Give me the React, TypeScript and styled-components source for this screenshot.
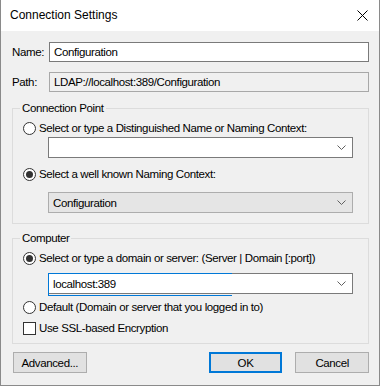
import React from "react";
import styled, { createGlobalStyle } from "styled-components";

const GlobalStyle = createGlobalStyle`
  html, body {
    margin: 0;
    padding: 0;
    background: #ffffff;
  }
  * {
    box-sizing: border-box;
  }
`;

const FONT = `"Segoe UI", "Liberation Sans", Arial, sans-serif`;

const Window = styled.div`
  width: 380px;
  height: 386px;
  display: flex;
  flex-direction: column;
  background: #f0f0f0;
  border: 1px solid #8a8a8a;
  border-top: none;
  font-family: ${FONT};
  font-size: 11.5px;
  letter-spacing: -0.38px;
  color: #000;
  overflow: hidden;
`;

const TitleBar = styled.div`
  height: 31px;
  flex: none;
  background: #ffffff;
  display: flex;
  align-items: center;
  justify-content: space-between;
  padding: 0 11px 0 9px;
`;

const Title = styled.div`
  font-size: 12px;
  letter-spacing: 0;
  line-height: 16px;
  padding-bottom: 1px;
`;

const CloseButton = styled.div`
  width: 12px;
  height: 12px;
  display: flex;
  align-items: center;
  justify-content: center;
`;

const Body = styled.div`
  display: flex;
  flex-direction: column;
  padding: 11px 10px 0 11px;
`;

const FieldRow = styled.div<{ $mt?: number }>`
  display: flex;
  align-items: center;
  height: 20px;
  margin-top: ${(p) => p.$mt ?? 0}px;
`;

const FieldLabel = styled.div`
  width: 37px;
  flex: none;
  line-height: 16px;
`;

const TextBox = styled.div<{ $readOnly?: boolean }>`
  width: 320px;
  height: 20px;
  border: 1px solid ${(p) => (p.$readOnly ? "#a8a8a8" : "#7a7a7a")};
  background: ${(p) => (p.$readOnly ? "#f0f0f0" : "#ffffff")};
  display: flex;
  align-items: center;
  padding-left: 4px;
  line-height: 16px;
`;

const Group = styled.div<{ $mt: number; $h: number }>`
  position: relative;
  margin-top: ${(p) => p.$mt}px;
  width: 357px;
  height: ${(p) => p.$h}px;
  border: 1px solid #dcdcdc;
  display: flex;
  flex-direction: column;
  padding-left: 10px;
`;

const Caption = styled.span`
  position: absolute;
  top: -9px;
  left: 7px;
  padding: 0 2px;
  background: #f0f0f0;
  line-height: 16px;
`;

const OptionRow = styled.div<{ $mt: number }>`
  display: flex;
  align-items: center;
  gap: 3px;
  height: 16px;
  margin-top: ${(p) => p.$mt}px;
  line-height: 16px;
  white-space: nowrap;
`;

const Radio = styled.span<{ $checked?: boolean }>`
  width: 13px;
  height: 13px;
  flex: none;
  border-radius: 50%;
  border: 1px solid #333333;
  background: #ffffff;
  display: flex;
  align-items: center;
  justify-content: center;
  &::after {
    content: "";
    display: ${(p) => (p.$checked ? "block" : "none")};
    width: 7px;
    height: 7px;
    border-radius: 50%;
    background: #333333;
  }
`;

const Check = styled.span`
  width: 13px;
  height: 13px;
  flex: none;
  border: 1px solid #333333;
  background: #ffffff;
`;

const Combo = styled.div<{ $mt: number; $list?: boolean; $focus?: boolean }>`
  position: relative;
  margin-top: ${(p) => p.$mt}px;
  margin-left: 25px;
  width: 305px;
  height: 21px;
  border: 1px solid ${(p) => (p.$list ? "#adadad" : "#7a7a7a")};
  background: ${(p) => (p.$list ? "#e5e5e5" : "#ffffff")};
  display: flex;
  align-items: center;
  justify-content: space-between;
  padding: 0 6px 0 4px;
  line-height: 16px;
  ${(p) =>
    p.$focus &&
    `
    &::before {
      content: "";
      position: absolute;
      left: -1px;
      top: -1px;
      width: 183px;
      height: 21px;
      border: 1px solid #0078d7;
      border-right: none;
      pointer-events: none;
    }
  `}
`;

const ButtonBar = styled.div`
  display: flex;
  align-items: center;
  margin-top: 8px;
  padding-left: 1px;
`;

const Button = styled.div<{ $default?: boolean; $ml?: number }>`
  width: 74px;
  height: 21px;
  margin-left: ${(p) => p.$ml ?? 0}px;
  background: #e1e1e1;
  border: ${(p) => (p.$default ? "2px solid #0078d7" : "1px solid #adadad")};
  display: flex;
  align-items: center;
  justify-content: center;
  line-height: 16px;
`;

const Chevron = () => (
  <svg width="9" height="5" viewBox="0 0 9 5">
    <path d="M0.5 0.5 L4.5 4.5 L8.5 0.5" fill="none" stroke="#606060" strokeWidth="1" />
  </svg>
);

const CloseIcon = () => (
  <svg width="11" height="11" viewBox="0 0 11 11">
    <path d="M0.5 0.5 L10.5 10.5 M10.5 0.5 L0.5 10.5" stroke="#000" strokeWidth="1" />
  </svg>
);

export default function App() {
  return (
    <>
      <GlobalStyle />
      <Window>
        <TitleBar>
          <Title>Connection Settings</Title>
          <CloseButton>
            <CloseIcon />
          </CloseButton>
        </TitleBar>
        <Body>
          <FieldRow>
            <FieldLabel>Name:</FieldLabel>
            <TextBox>Configuration</TextBox>
          </FieldRow>
          <FieldRow $mt={10}>
            <FieldLabel>Path:</FieldLabel>
            <TextBox $readOnly>LDAP://localhost:389/Configuration</TextBox>
          </FieldRow>

          <Group $mt={16} $h={116}>
            <Caption>Connection Point</Caption>
            <OptionRow $mt={11}>
              <Radio />
              Select or type a Distinguished Name or Naming Context:
            </OptionRow>
            <Combo $mt={1}>
              <span />
              <Chevron />
            </Combo>
            <OptionRow $mt={8}>
              <Radio $checked />
              Select a well known Naming Context:
            </OptionRow>
            <Combo $mt={10} $list>
              <span>Configuration</span>
              <Chevron />
            </Combo>
          </Group>

          <Group $mt={14} $h={106}>
            <Caption>Computer</Caption>
            <OptionRow $mt={11}>
              <Radio $checked />
              Select or type a domain or server: (Server | Domain [:port])
            </OptionRow>
            <Combo $mt={7} $focus>
              <span>localhost:389</span>
              <Chevron />
            </Combo>
            <OptionRow $mt={5}>
              <Radio />
              Default (Domain or server that you logged in to)
            </OptionRow>
            <OptionRow $mt={5}>
              <Check />
              Use SSL-based Encryption
            </OptionRow>
          </Group>

          <ButtonBar>
            <Button>Advanced...</Button>
            <Button $default $ml={122}>OK</Button>
            <Button $ml={13}>Cancel</Button>
          </ButtonBar>
        </Body>
      </Window>
    </>
  );
}
